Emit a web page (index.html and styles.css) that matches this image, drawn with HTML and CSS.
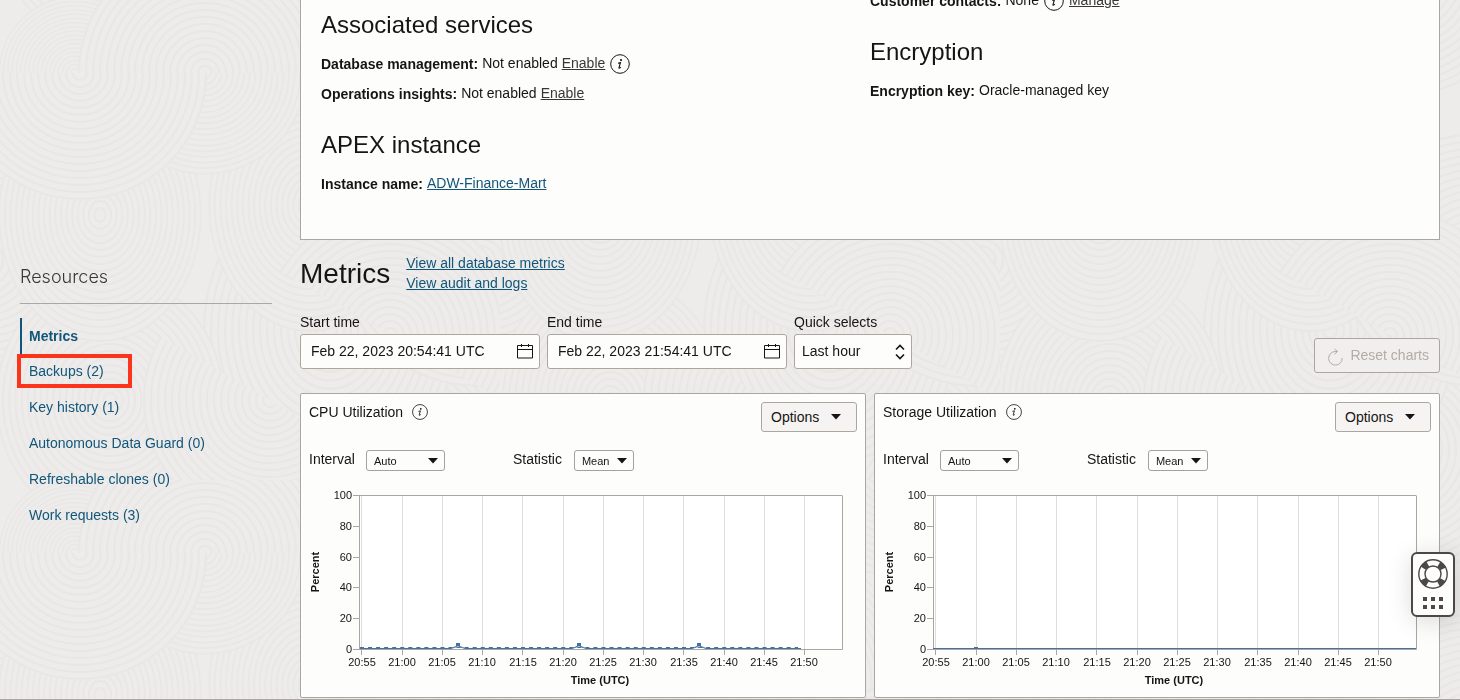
FILE: index.html
```html
<!DOCTYPE html>
<html lang="en">
<head>
<meta charset="utf-8">
<title>Autonomous Database details</title>
<link rel="stylesheet" href="styles.css">
</head>
<body>
<svg class="texture" aria-hidden="true">
  <defs>
    <g id="disc" class="ring">
      <circle r="126"/><circle r="119"/><circle r="112"/><circle r="105"/><circle r="98"/><circle r="91"/><circle r="84"/><circle r="77"/><circle r="70"/><circle r="63"/><circle r="56"/><circle r="49"/><circle r="42"/><circle r="35"/><circle r="28"/><circle r="21"/><circle r="14"/><circle r="7"/>
    </g>
    <clipPath id="above"><path d="M-130-130h260V0h-260z"/></clipPath>
    <g id="arch" clip-path="url(#above)"><use href="#disc"/></g>
    <pattern id="swirl" width="500" height="480" patternUnits="userSpaceOnUse">
      <use href="#disc" x="400" y="-30"/>
      <use href="#disc" x="400" y="450"/>
      <use href="#disc" transform="translate(330 330) scale(1 1.200)"/>
      <use href="#disc" transform="translate(-20 260) scale(1.100 1)"/>
      <use href="#disc" transform="translate(480 260) scale(1.100 1)"/>
      <use href="#disc" transform="translate(110 -80) scale(.9 1)"/>
      <use href="#disc" transform="translate(110 400) scale(.9 1)"/>
      <use href="#disc" transform="translate(100 215) scale(.8 1)"/>
      <use href="#disc" transform="translate(310 205) scale(.8 1)"/>
      <use href="#disc" transform="translate(75 73) scale(.6)"/>
      <use href="#disc" transform="translate(205 73) scale(.8)"/>
      <use href="#arch" transform="translate(205 73)"/>
      <use href="#arch" transform="translate(80 73) rotate(180)"/>
      <use href="#arch" transform="translate(390 335) rotate(30)"/>
      <use href="#arch" transform="translate(270 400) rotate(-150)"/>
    </pattern>
    <symbol id="info" viewBox="0 0 20 20">
      <circle cx="10" cy="10" r="9.300" fill="none" stroke="currentColor"/>
      <circle cx="11" cy="6" r="1.100" fill="currentColor"/>
      <path d="M8 9.200l2.500-.7-1.500 5.100c-.2.900.6.800 1.900-.5" fill="none" stroke="currentColor" stroke-width="1.100"/>
    </symbol>
    <symbol id="calendar" viewBox="0 0 16 16">
      <path d="M.5 2.500h15v12.500H.500zM.5 6.500h15M4.500 1v3M11.500 1v3" fill="none" stroke="currentColor"/>
    </symbol>
    <symbol id="caret" viewBox="0 0 10 6"><path d="M0 0h10L5 5.600z" fill="currentColor"/></symbol>
  </defs>
  <rect width="100%" height="100%" fill="url(#swirl)"/>
</svg>

<div class="page">
  <aside class="sidebar">
    <h2 class="sidebar-title">Resources</h2>
    <nav class="resources">
      <a class="resource current" href="#metrics">Metrics</a>
      <a class="resource marked" href="#backups">Backups (2)</a>
      <a class="resource" href="#keys">Key history (1)</a>
      <a class="resource" href="#guard">Autonomous Data Guard (0)</a>
      <a class="resource" href="#clones">Refreshable clones (0)</a>
      <a class="resource" href="#requests">Work requests (3)</a>
    </nav>
  </aside>

  <main class="content">
    <section class="panel">
      <div class="details">
        <h2 class="group-title">Associated services</h2>
        <p class="row"><b>Database management:</b><span>Not enabled</span><a class="plain-link" href="#dbm">Enable</a><svg class="info-large"><use href="#info"/></svg></p>
        <p class="row"><b>Operations insights:</b><span>Not enabled</span><a class="plain-link" href="#ops">Enable</a></p>
        <h2 class="group-title">APEX instance</h2>
        <p class="row"><b>Instance name:</b><a class="link" href="#apex">ADW-Finance-Mart</a></p>
      </div>
      <div class="details">
        <p class="row"><b>Customer contacts:</b><span>None</span><svg class="info-large"><use href="#info"/></svg><a class="plain-link" href="#contacts">Manage</a></p>
        <h2 class="group-title">Encryption</h2>
        <p class="row"><b>Encryption key:</b><span>Oracle-managed key</span></p>
      </div>
    </section>

    <header class="metrics-head" id="metrics">
      <h1 class="metrics-title">Metrics</h1>
      <div class="metrics-links">
        <a class="link" href="#all">View all database metrics</a>
        <a class="link" href="#logs">View audit and logs</a>
      </div>
    </header>

    <div class="filters">
      <div class="field">
        <label for="start">Start time</label>
        <div class="date-box">
          <input id="start" type="text" value="Feb 22, 2023 20:54:41 UTC">
          <button type="button" aria-label="Choose start time"><svg><use href="#calendar"/></svg></button>
        </div>
      </div>
      <div class="field">
        <label for="end">End time</label>
        <div class="date-box">
          <input id="end" type="text" value="Feb 22, 2023 21:54:41 UTC">
          <button type="button" aria-label="Choose end time"><svg><use href="#calendar"/></svg></button>
        </div>
      </div>
      <div class="field">
        <label for="quick">Quick selects</label>
        <div class="select-box quick">
          <select id="quick"><option>Last hour</option></select>
          <svg class="updown" viewBox="0 0 10 16"><path d="M1 5.500L5 1.500l4 4M1 10.500l4 4 4-4" fill="none" stroke="currentColor" stroke-width="1.600"/></svg>
        </div>
      </div>
      <button class="reset" type="button" disabled>
        <svg viewBox="0 0 16 18"><path d="M7.500 .8l3 2.700-3 2.700M10.500 3.500H8a6.800 6.800 0 1 0 7.200 6.500" fill="none" stroke="currentColor"/></svg>
        Reset charts
      </button>
    </div>

    <div class="cards">
      <section class="card">
        <div class="card-head">
          <h3 class="card-title">CPU Utilization</h3>
          <svg class="info-small"><use href="#info"/></svg>
          <button class="options" type="button">Options <svg><use href="#caret"/></svg></button>
        </div>
        <div class="controls">
          <label for="cpu-interval">Interval</label>
          <div class="select-box small interval"><select id="cpu-interval"><option>Auto</option></select><svg class="down"><use href="#caret"/></svg></div>
          <label for="cpu-stat">Statistic</label>
          <div class="select-box small statistic"><select id="cpu-stat"><option>Mean</option></select><svg class="down"><use href="#caret"/></svg></div>
        </div>
        <svg class="chart" viewBox="0 0 564 212" role="img" aria-label="CPU utilization in percent">
          <rect class="plot" x="58.500" y="10.500" width="483" height="154"/>
          <path class="grid" d="M60.500 11v153M101.500 11v153M141.500 11v153M181.500 11v153M221.500 11v153M262.500 11v153M302.500 11v153M342.500 11v153M382.500 11v153M423.500 11v153M463.500 11v153M503.500 11v153"/>
          <path class="axis" d="M58.500 10v155M52 10.500h489M52 41.500h6M52 72.500h6M52 102.500h6M52 133.500h6M52 164.500h489.500V10.500M60.500 165v5M101.500 165v5M141.500 165v5M181.500 165v5M221.500 165v5M262.500 165v5M302.500 165v5M342.500 165v5M382.500 165v5M423.500 165v5M463.500 165v5M503.500 165v5"/>
          <path class="area" d="M149 163l8-3 8 3zM270 163l8-3 8 3zM390 163l8-3 8 3z"/>
          <path class="series thin" d="M59 163.500h91l3-1 4-2 4 2 3 1h107l3-1 4-2 4 2 3 1h106l3-1 4-2 4 2 3 1h95"/>
          <path class="dots" d="M59 162.500h438"/>
          <path class="peaks" d="M155 158h4v3h-4zM276 158h4v3h-4zM396 158h4v3h-4z"/>
          <g class="y-labels"><text x="51" y="14">100</text><text x="51" y="45">80</text><text x="51" y="76">60</text><text x="51" y="106">40</text><text x="51" y="137">20</text><text x="51" y="168">0</text></g>
          <g class="x-labels"><text x="61" y="181">20:55</text><text x="101" y="181">21:00</text><text x="141" y="181">21:05</text><text x="181" y="181">21:10</text><text x="222" y="181">21:15</text><text x="262" y="181">21:20</text><text x="302" y="181">21:25</text><text x="342" y="181">21:30</text><text x="383" y="181">21:35</text><text x="423" y="181">21:40</text><text x="463" y="181">21:45</text><text x="503" y="181">21:50</text></g>
          <text class="axis-title" x="299" y="199">Time (UTC)</text>
          <text class="axis-title" transform="translate(18 87) rotate(-90)">Percent</text>
        </svg>
      </section>

      <section class="card">
        <div class="card-head">
          <h3 class="card-title">Storage Utilization</h3>
          <svg class="info-small"><use href="#info"/></svg>
          <button class="options" type="button">Options <svg><use href="#caret"/></svg></button>
        </div>
        <div class="controls">
          <label for="st-interval">Interval</label>
          <div class="select-box small interval"><select id="st-interval"><option>Auto</option></select><svg class="down"><use href="#caret"/></svg></div>
          <label for="st-stat">Statistic</label>
          <div class="select-box small statistic"><select id="st-stat"><option>Mean</option></select><svg class="down"><use href="#caret"/></svg></div>
        </div>
        <svg class="chart" viewBox="0 0 564 212" role="img" aria-label="Storage utilization in percent">
          <rect class="plot" x="58.500" y="10.500" width="483" height="154"/>
          <path class="grid" d="M60.500 11v153M101.500 11v153M141.500 11v153M181.500 11v153M221.500 11v153M262.500 11v153M302.500 11v153M342.500 11v153M382.500 11v153M423.500 11v153M463.500 11v153M503.500 11v153"/>
          <path class="axis" d="M58.500 10v155M52 10.500h489M52 41.500h6M52 72.500h6M52 102.500h6M52 133.500h6M52 164.500h489.500V10.500M60.500 165v5M101.500 165v5M141.500 165v5M181.500 165v5M221.500 165v5M262.500 165v5M302.500 165v5M342.500 165v5M382.500 165v5M423.500 165v5M463.500 165v5M503.500 165v5"/>
          <path class="series thin" d="M58 163.500h483"/>
          <path class="peaks" d="M99 162h4v1h-4z"/>
          <g class="y-labels"><text x="51" y="14">100</text><text x="51" y="45">80</text><text x="51" y="76">60</text><text x="51" y="106">40</text><text x="51" y="137">20</text><text x="51" y="168">0</text></g>
          <g class="x-labels"><text x="61" y="181">20:55</text><text x="101" y="181">21:00</text><text x="141" y="181">21:05</text><text x="181" y="181">21:10</text><text x="222" y="181">21:15</text><text x="262" y="181">21:20</text><text x="302" y="181">21:25</text><text x="342" y="181">21:30</text><text x="383" y="181">21:35</text><text x="423" y="181">21:40</text><text x="463" y="181">21:45</text><text x="503" y="181">21:50</text></g>
          <text class="axis-title" x="299" y="199">Time (UTC)</text>
          <text class="axis-title" transform="translate(18 87) rotate(-90)">Percent</text>
        </svg>
      </section>
    </div>
  </main>
</div>
<footer class="page-end"></footer>

<button class="help" type="button" aria-label="Help">
  <svg class="buoy" viewBox="0 0 30 30">
    <circle cx="15" cy="15" r="11" fill="none" stroke="#fdfdfb" stroke-width="7"/>
    <circle cx="15" cy="15" r="11" fill="none" stroke="currentColor" stroke-width="7" stroke-dasharray="6 11.280" stroke-dashoffset="-5.640"/>
    <circle cx="15" cy="15" r="14.200" fill="none" stroke="currentColor" stroke-width="1.400"/>
    <circle cx="15" cy="15" r="8" fill="#fdfdfb" stroke="currentColor" stroke-width="1.400"/>
  </svg>
  <svg class="grip" viewBox="0 0 20 12"><path d="M0 0h4v4H0zM8 0h4v4H8zM16 0h4v4h-4zM0 8h4v4H0zM8 8h4v4H8zM16 8h4v4h-4z" fill="currentColor"/></svg>
</button>
</body>
</html>
```
FILE: styles.css
```css
*, ::before, ::after { box-sizing: border-box; }

body {
  margin: 0;
  background: #edecea;
  color: #161513;
  font: 14px/20px "Liberation Sans", Arial, sans-serif;
  overflow-x: hidden;
}

h1, h2, h3, p { margin: 0; font-weight: 400; }
input, select, button { font: inherit; color: inherit; margin: 0; }

.texture {
  position: fixed;
  inset: 0;
  width: 100%;
  height: 100%;
  z-index: -1;
}
.ring { fill: #edecea; stroke: #e8e7e5; stroke-width: 2; }

.page {
  display: grid;
  grid-template-columns: 252px minmax(0, 1fr);
  gap: 28px;
  padding: 0 20px;
}

/* Sidebar */
.sidebar { padding-top: 265px; }
.sidebar-title {
  padding-bottom: 14px;
  border-bottom: 1px solid #aba8a3;
  color: #3a3733;
  font: 300 18px/24px Inter, "Liberation Sans", sans-serif;
}
.resources { display: flex; flex-direction: column; margin-top: 14px; }
.resource {
  position: relative;
  height: 36px;
  padding-left: 7px;
  border-left: 2px solid transparent;
  line-height: 34px;
  color: #11567a;
  text-decoration: none;
}
.current { border-color: #11567a; font-weight: 700; line-height: 36px; }
.marked::after {
  content: "";
  position: absolute;
  left: -5px;
  top: 0;
  width: 115px;
  height: 34px;
  border: 4px solid #fb351b;
}

/* Details panel */
.panel {
  display: grid;
  grid-template-columns: 1fr 1fr;
  margin-top: -14px;
  padding: 0 20px 40px;
  background: #fdfdfb;
  border: 1px solid #aba6a1;
  border-top: 0;
}
.group-title { margin: 21px 0 9px; font-size: 24px; line-height: 30px; }
.group-title:first-child { margin-top: 24px; }
.row { display: flex; align-items: center; gap: 4px; height: 30px; }
.row span, .row a { padding-bottom: 2px; }
.info-large { width: 20px; height: 20px; margin: 0 1px; }
.plain-link { color: #3a3733; }
.link { color: #11567a; }
.link, .plain-link { text-underline-offset: 1px; }

/* Metrics */
.metrics-head { display: flex; align-items: center; gap: 16px; margin-top: 13px; }
.metrics-title { padding-top: 2px; font-size: 28px; line-height: 38px; }
.metrics-links { display: flex; flex-direction: column; align-items: flex-start; }

.filters { display: flex; gap: 7px; margin-top: 19px; height: 61px; }
.field { display: flex; flex-direction: column; gap: 2px; }
.date-box, .select-box {
  display: flex;
  height: 35px;
  background: #fdfdfb;
  border: 1px solid #aea59d;
  border-radius: 3px;
}
.date-box { width: 240px; }
.date-box input { flex: 1; min-width: 0; padding: 0 10px 2px; border: 0; background: none; }
.date-box button { padding: 0 6px 2px; border: 0; background: none; display: flex; align-items: center; }
.date-box svg { width: 16px; height: 16px; }

.select-box { position: relative; }
.select-box select {
  width: 100%;
  padding: 0 7px;
  border: 0;
  background: none;
  appearance: none;
}
.select-box svg { position: absolute; pointer-events: none; }
.quick { width: 118px; }
.quick select { padding-bottom: 2px; }
.updown { right: 6px; top: 9px; width: 10px; height: 16px; }
.small { height: 21px; border-color: #a5a19c; }
.small select { font-size: 11px; }
.down { right: 6px; top: 7px; width: 10px; height: 6px; }

.reset {
  display: flex;
  align-items: center;
  align-self: flex-end;
  gap: 7px;
  height: 35px;
  margin-left: auto;
  padding: 0 10px 1px 12px;
  background: #f0efed;
  border: 1px solid #aea59d;
  border-radius: 3px;
  color: #b3aca5;
}
.reset svg { width: 16px; height: 18px; margin-top: 4px; }

.cards { display: grid; grid-template-columns: 1fr 1fr; gap: 8px; margin-top: 20px; }
.card { padding-top: 8px; background: #fdfdfb; border: 1px solid #aba6a1; border-radius: 2px; }
.card-head { display: flex; gap: 9px; padding: 0 8px; }
.card-title { font-size: 14px; line-height: 20px; }
.info-small { width: 16px; height: 16px; margin-top: 2px; }
.options {
  display: flex;
  align-items: center;
  justify-content: space-between;
  width: 96px;
  height: 30px;
  margin-left: auto;
  padding: 0 15px 0 9px;
  background: #f5f4f2;
  border: 1px solid #aea59d;
  border-radius: 3px;
}
.options svg { width: 10px; height: 6px; }
.controls { display: flex; align-items: center; margin: 18px 8px 14px; }
.controls label { height: 21px; line-height: 19px; }
.interval { width: 79px; margin: 0 68px 0 11px; }
.statistic { width: 60px; margin-left: 12px; }

/* Charts */
.chart { display: block; width: 100%; font-size: 11px; fill: #161513; }
.plot { fill: #ffffff; }
.grid { stroke: #dddddd; fill: none; }
.axis { stroke: #aba6a1; fill: none; }
.area { fill: #c7d4e4; }
.series { fill: none; stroke: #4470a4; }
.thin { stroke-width: 1; }
.dots { fill: none; stroke: #4470a4; stroke-width: 1; stroke-dasharray: 4 4.050; }
.peaks { fill: #4470a4; }
.y-labels { text-anchor: end; }
.x-labels { text-anchor: middle; }
.axis-title { font-weight: 700; text-anchor: middle; }

.page-end { margin-top: 1px; border-top: 1px solid #aba6a1; }

.help {
  position: fixed;
  right: 5px;
  top: 552px;
  display: flex;
  flex-direction: column;
  align-items: center;
  gap: 8px;
  width: 44px;
  height: 65px;
  padding: 5px 0;
  background: #fdfdfb;
  border: 2px solid #4b4845;
  border-radius: 6px;
  box-shadow: 0 4px 24px rgba(0, 0, 0, 0.14);
  color: #4b4845;
}
.buoy { width: 30px; height: 30px; }
.grip { width: 20px; height: 12px; }
```
